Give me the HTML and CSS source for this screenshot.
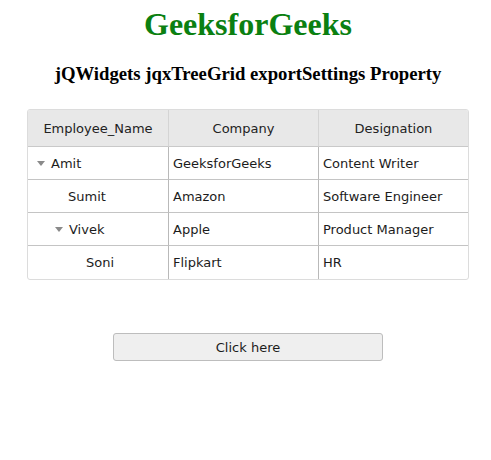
FILE: index.html
```html
<!DOCTYPE html>
<html>
<head>
<meta charset="utf-8">
<link rel="stylesheet" href="styles.css">
</head>
<body>
<div class="page">
  <h1 class="title">GeeksforGeeks</h1>
  <h3 class="subtitle">jQWidgets jqxTreeGrid exportSettings Property</h3>
  <div class="grid">
    <div class="hcell">Employee_Name</div>
    <div class="hcell">Company</div>
    <div class="hcell last">Designation</div>

    <div class="cell lvl0"><span class="arrow"></span>Amit</div>
    <div class="cell">GeeksforGeeks</div>
    <div class="cell last">Content Writer</div>

    <div class="cell lvl1">Sumit</div>
    <div class="cell">Amazon</div>
    <div class="cell last">Software Engineer</div>

    <div class="cell lvl1b"><span class="arrow"></span>Vivek</div>
    <div class="cell">Apple</div>
    <div class="cell last">Product Manager</div>

    <div class="cell lvl2 bottom">Soni</div>
    <div class="cell bottom">Flipkart</div>
    <div class="cell last bottom">HR</div>
  </div>
  <button class="btn">Click here</button>
</div>
</body>
</html>
```

FILE: styles.css
```css
html, body {
  margin: 0;
  padding: 0;
  background: #fff;
}
.page {
  padding-left: 5px;
  display: flex;
  flex-direction: column;
  align-items: center;
}
.title {
  margin: 6px 0 0;
  font-family: "Liberation Serif", serif;
  font-size: 32px;
  font-weight: bold;
  color: #0b8011;
  line-height: 37px;
}
.subtitle {
  margin: 20px 0 0;
  font-family: "Liberation Serif", serif;
  font-size: 18.72px;
  font-weight: bold;
  color: #000;
  line-height: 22px;
}
.grid {
  margin-top: 24px;
  display: grid;
  grid-template-columns: 141px 150px 149px;
  grid-template-rows: 37px repeat(4, 33px);
  border: 1px solid #dcdcdc;
  border-radius: 3px;
  overflow: hidden;
  font-family: "DejaVu Sans", Verdana, sans-serif;
  font-size: 13px;
  color: #1c1c1c;
  box-sizing: content-box;
}
.hcell {
  background: #e8e8e8;
  border-right: 1px solid #d4d4d4;
  border-bottom: 1px solid #c9c9c9;
  display: flex;
  align-items: center;
  justify-content: center;
  color: #222;
}
.cell {
  border-right: 1px solid #b9b9b9;
  border-bottom: 1px solid #c4c4c4;
  display: flex;
  align-items: center;
  padding-left: 4px;
}
.last {
  border-right: none;
}
.bottom {
  border-bottom: none;
}
.lvl0 { padding-left: 9px; }
.lvl1 { padding-left: 40px; }
.lvl1b { padding-left: 27px; }
.lvl2 { padding-left: 58px; }
.arrow {
  width: 0;
  height: 0;
  border-left: 4px solid transparent;
  border-right: 4px solid transparent;
  border-top: 5px solid #8a8a8a;
  margin-right: 6px;
  margin-top: 1px;
}
.btn {
  margin-top: 53px;
  width: 270px;
  height: 28px;
  background: #efefef;
  border: 1px solid #bdbdbd;
  border-radius: 3px;
  font-family: "DejaVu Sans", Verdana, sans-serif;
  font-size: 13px;
  color: #1c1c1c;
  padding: 0;
}
```
